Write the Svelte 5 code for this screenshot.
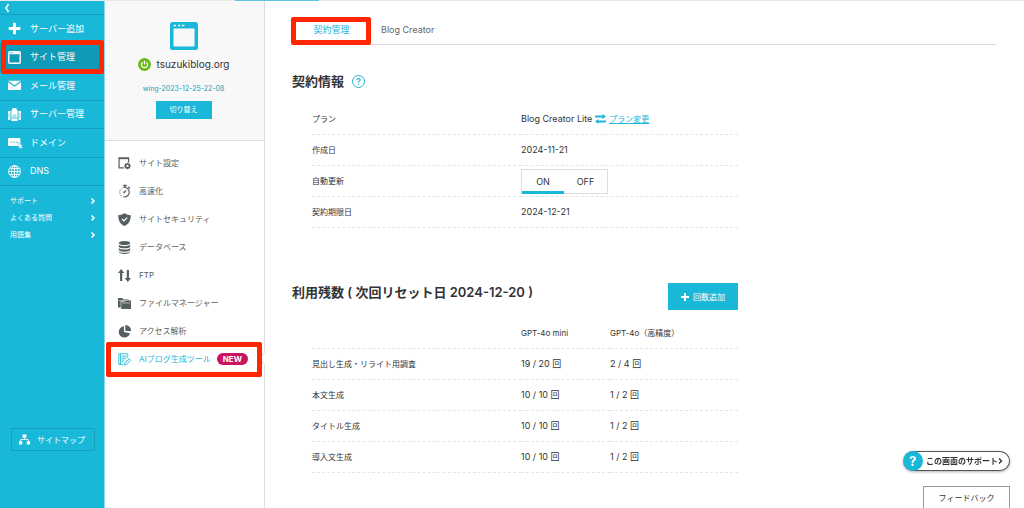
<script>
    let renewal = 'on';

    const globalMenu = [
        { label: 'サーバー追加', icon: '<path d="M7.800 1h4.400v6.800H19v4.400h-6.800V19H7.800v-6.800H1V7.800h6.800z" fill="currentColor"/>' },
        { label: 'サイト管理', active: true, icon: '<rect x="1.200" y="1.200" width="17.600" height="17.600" rx="1.500" fill="none" stroke="currentColor" stroke-width="2.200"/><path d="M2 2h16v3H2z" fill="currentColor"/><path d="M3 3h1.500M6 3h1.500" stroke="#0f9bb8" stroke-width="1.200"/>' },
        { label: 'メール管理', icon: '<path d="M0 5v12h20V5l-10 7z" fill="currentColor"/><path d="M0 2.800h20L10 9.800z" fill="currentColor"/>' },
        { label: 'サーバー管理', icon: '<path d="M5.200 3h1.600V0h6.400v3h1.600v12H5.200z" fill="currentColor"/><path d="M0 4.500h3.800V18H0zM16.200 4.500H20V18h-3.800zM5.200 16h9.600v4H5.200z" fill="currentColor"/><path d="M7 11h6M7 13.500h6M1.800 8v7M18.200 8v7" stroke="#19b8d9" stroke-width="1"/>' },
        { label: 'ドメイン', icon: '<rect x="0" y="3" width="19" height="12.500" rx="2" fill="currentColor"/><path d="M3.500 9.500h2.500M7.500 9.500h3M12 9.500h3.500" stroke="#19b8d9" stroke-width="2" opacity=".65"/><path d="M15 11l8 3.200-3 1.200 2.600 2.600-1.800 1.800-2.600-2.600-1.200 3z" fill="currentColor" stroke="#19b8d9" stroke-width=".6"/>' },
        { label: 'DNS', icon: '<g fill="none" stroke="currentColor" stroke-width="1.400"><circle cx="10" cy="10" r="9.200"/><ellipse cx="10" cy="10" rx="4.500" ry="9.200"/><path d="M10 1v18M1 10h18M2.500 5.500h15M2.500 14.500h15"/></g>' }
    ];

    const supportLinks = ['サポート', 'よくある質問', '用語集'];

    const siteMenu = [
        { label: 'サイト設定', icon: '<path d="M11 20H2V2h17.500v8" fill="none" stroke="currentColor" stroke-width="2.200"/><path d="M1 1h19.500v3H1z" fill="currentColor"/><circle cx="17.500" cy="16.500" r="3.600" fill="none" stroke="currentColor" stroke-width="3"/><path d="M17.500 10.500v2M17.500 20.500v2M11.500 16.500h2M21.500 16.500h2M13.200 12.200l1.700 1.700M20 19l1.700 1.700M13.200 20.700l1.700-1.700M20 14l1.700-1.700" stroke="currentColor" stroke-width="2.200"/>' },
        { label: '高速化', icon: '<path d="M12 4.500a8.700 8.700 0 1 1 0 17.400" fill="none" stroke="currentColor" stroke-width="2.200"/><path d="M12 21.900a8.700 8.700 0 0 1 0-17.400" fill="none" stroke="currentColor" stroke-width="1.400" stroke-dasharray="3 1.800"/><path d="M9.500 1h6.500M12.500 1v4M19 3.500l3 3" stroke="currentColor" stroke-width="2.600"/><path d="M10 12.500l6.500-4-4 6.500a1.800 1.800 0 0 1-2.500-2.500z" fill="currentColor"/>' },
        { label: 'サイトセキュリティ', icon: '<path d="M12 0c3 2.600 6.500 3.800 11.500 4.200C23.500 14 20 20.500 12 24 4 20.500.5 14 .5 4.200 5.500 3.800 9 2.600 12 0z" fill="currentColor"/><path d="M7.500 11l3.500 3.500L17 8.500" fill="none" stroke="#fff" stroke-width="2.400"/>' },
        { label: 'データベース', icon: '<ellipse cx="12" cy="3.800" rx="10.500" ry="3.800" fill="currentColor"/><path d="M1.500 6.500c2 4 19 4 21 0v4c-2 4-19 4-21 0zM1.500 12.700c2 4 19 4 21 0v4c-2 4-19 4-21 0zM1.500 18.700c2 4 19 4 21 0v1.600c-2 4.900-19 4.900-21 0z" fill="currentColor"/>' },
        { label: 'FTP', icon: '<path d="M5.800 0l5.800 7.500H7.800V22h-4V7.500H0zM18.200 24l-5.800-7.500h3.800V2h4v14.500H24z" fill="currentColor"/>' },
        { label: 'ファイルマネージャー', icon: '<path d="M0 2h8l2 2.500h9.500v3H5v12H0z" fill="currentColor"/><path d="M6 8.500h6.500l2-2H24V22H6z" fill="currentColor"/><path d="M1.500 6.500h16M7.500 11h15" stroke="#fff" stroke-width="1"/>' },
        { label: 'アクセス解析', icon: '<path d="M11 2.500A10.400 10.400 0 1 0 22 15l-11-2z" fill="currentColor"/><path d="M13.500 0A10.500 10.500 0 0 1 24 11.500l-10.500-1z" fill="currentColor"/>' },
        { label: 'AIブログ生成ツール', active: true, badge: 'NEW', icon: '<path d="M18 9V1.500H1.500V21H10M6.500 6h9M6.500 9.500h9M6.500 13h6M6.500 16.500h4M4.500 2v19" fill="none" stroke="currentColor" stroke-width="1.600"/><path d="M12 22.500l1-4.500 7.500-7.500 3 3L16 21z" fill="none" stroke="currentColor" stroke-width="1.600"/><path d="M14 18.500l6-6" stroke="currentColor"/>' }
    ];

    const usage = [
        { name: '見出し生成・リライト用調査', mini: '19 / 20 回', high: '2 / 4 回' },
        { name: '本文生成', mini: '10 / 10 回', high: '1 / 2 回' },
        { name: 'タイトル生成', mini: '10 / 10 回', high: '1 / 2 回' },
        { name: '導入文生成', mini: '10 / 10 回', high: '1 / 2 回' }
    ];
</script>

<div class="topbar"><span></span></div>
<div class="layout">
    <aside class="sidebar">
        <button class="collapse" aria-label="メニューを閉じる">
            <svg viewBox="0 0 6 8"><path d="M4.500 0L2 4l2.500 4" fill="none" stroke="currentColor" stroke-width="1.600"/></svg>
        </button>
        <nav class="global">
            {#each globalMenu as item}
                <a href="#top" class:active={item.active} class:marked={item.active}>
                    <svg viewBox="0 0 20 20">{@html item.icon}</svg>
                    <span>{item.label}</span>
                </a>
            {/each}
        </nav>
        <nav class="support">
            {#each supportLinks as link}
                <a href="#support">
                    {link}
                    <svg viewBox="0 0 6 8"><path d="M1.500 1.500L4 4 1.500 6.500" fill="none" stroke="currentColor" stroke-width="1.500"/></svg>
                </a>
            {/each}
        </nav>
        <a href="#sitemap" class="sitemap">
            <svg viewBox="0 0 20 20">
                <path d="M6.500 1h7v6h-7zM0 13h6v6H0zM14 13h6v6h-6z" fill="currentColor" />
                <path d="M10 6v4M3 14v-4h14v4" fill="none" stroke="currentColor" stroke-width="1.500" />
            </svg>
            サイトマップ
        </a>
    </aside>

    <aside class="site">
        <div class="site-head">
            <svg class="site-icon" viewBox="0 0 28 28">
                <rect width="28" height="28" rx="2.500" fill="#19b8d9" />
                <path d="M3.500 6.500h21v18h-21z" fill="#f8f8f8" />
                <path d="M3.500 3.500H6M8 3.500h2.500M12 3.500h2.500" stroke="#f8f8f8" stroke-width="1.500" />
            </svg>
            <div class="domain">
                <svg viewBox="0 0 14 14">
                    <circle cx="7" cy="7" r="7" fill="#6cb71c" />
                    <path d="M5 4.500a3.300 3.300 0 1 0 4 0M7 3v4" fill="none" stroke="#fff" stroke-width="1.300" />
                </svg>
                tsuzukiblog.org
            </div>
            <a href="#server" class="server">wing-2023-12-25-22-08</a>
            <button class="switch">切り替え</button>
        </div>
        <nav class="menu">
            {#each siteMenu as item}
                <a href="#menu" class:active={item.active} class:marked={item.active}>
                    <svg viewBox="0 0 24 24">{@html item.icon}</svg>
                    <span>{item.label}</span>
                    {#if item.badge}<b>{item.badge}</b>{/if}
                </a>
            {/each}
        </nav>
    </aside>

    <main>
        <nav class="tabs">
            <a href="#contract" class="active marked">契約管理</a>
            <a href="#creator">Blog Creator</a>
        </nav>

        <section>
            <header>
                <h2>契約情報</h2>
                <button class="help" aria-label="ヘルプ">?</button>
            </header>
            <table>
                <tbody>
                    <tr>
                        <th scope="row">プラン</th>
                        <td colspan="2">
                            <div class="plan">
                                Blog Creator Lite
                                <svg viewBox="0 0 11 10">
                                    <path d="M0 1.500h7.500V0L11 2.500 7.500 5V3.500H0zM11 8.500H3.500V10L0 7.500 3.500 5v1.500H11z" fill="#19b8d9" />
                                </svg>
                                <a href="#plan">プラン変更</a>
                            </div>
                        </td>
                    </tr>
                    <tr><th scope="row">作成日</th><td colspan="2">2024-11-21</td></tr>
                    <tr>
                        <th scope="row">自動更新</th>
                        <td colspan="2">
                            <div class="toggle">
                                <label><input type="radio" name="renewal" value="on" bind:group={renewal} /><span>ON</span></label>
                                <label><input type="radio" name="renewal" value="off" bind:group={renewal} /><span>OFF</span></label>
                            </div>
                        </td>
                    </tr>
                    <tr><th scope="row">契約期限日</th><td colspan="2">2024-12-21</td></tr>
                </tbody>
            </table>
        </section>

        <section class="usage">
            <header>
                <h2>利用残数 ( 次回リセット日 2024-12-20 )</h2>
                <button class="add">
                    <svg viewBox="0 0 8 8"><path d="M4 0v8M0 4h8" stroke="currentColor" stroke-width="2" /></svg>
                    回数追加
                </button>
            </header>
            <table>
                <thead>
                    <tr><td></td><th scope="col">GPT-4o mini</th><th scope="col">GPT-4o（高精度）</th></tr>
                </thead>
                <tbody>
                    {#each usage as row}
                        <tr><th scope="row">{row.name}</th><td>{row.mini}</td><td>{row.high}</td></tr>
                    {/each}
                </tbody>
            </table>
        </section>
    </main>
</div>

<div class="floating">
    <button class="screen-help">
        <i>?</i>
        この画面のサポート
        <svg viewBox="0 0 5 8"><path d="M1 1.500L3.500 4 1 6.500" fill="none" stroke="currentColor" stroke-width="1.400"/></svg>
    </button>
    <button class="feedback">フィードバック</button>
</div>

<style>
    :global(body) {
        margin: 0;
        background: #fff;
        color: #333;
        font: 9px/16px Inter, "Noto Sans CJK JP", sans-serif;
    }
    * {
        box-sizing: border-box;
    }
    a {
        color: inherit;
        text-decoration: none;
    }
    button {
        margin: 0;
        padding: 0;
        border: 0;
        background: none;
        color: inherit;
        font: inherit;
        cursor: pointer;
    }
    svg {
        flex: none;
        overflow: visible;
    }
    .topbar {
        height: 1px;
        background: #e8e8e8;
    }
    .topbar span {
        display: block;
        width: 84px;
        height: 1px;
        margin-left: 235px;
        background: #5cc5df;
    }
    .layout {
        display: flex;
        min-height: calc(100vh - 1px);
    }

    /* highlighted entries */
    .marked {
        position: relative;
    }
    .marked::after {
        content: "";
        position: absolute;
        inset: -4px 0 -3px 1px;
        border: 5px solid #ff2600;
        border-radius: 2px;
        z-index: 1;
    }

    .sidebar {
        flex: none;
        display: flex;
        flex-direction: column;
        width: 105px;
        border-right: 1px solid #8bdaec;
        background: #19b8d9;
        color: #fff;
    }
    .collapse {
        height: 13px;
        padding-left: 4px;
        text-align: left;
        line-height: 0;
    }
    .collapse svg {
        width: 6px;
        height: 8px;
    }
    .global {
        display: grid;
        grid-auto-rows: 1fr;
        height: 172px;
        border-bottom: 1px solid #149fbd;
    }
    .global a {
        display: flex;
        align-items: center;
        gap: 9px;
        padding-left: 8px;
        border-top: 1px solid #149fbd;
    }
    .global a.active {
        background: #0f9bb8;
    }
    .global svg {
        width: 13px;
        height: 13px;
    }
    .support {
        padding: 6px 8px 0 10px;
        font-size: 7px;
        line-height: 17px;
    }
    .support a {
        display: flex;
        align-items: center;
        justify-content: space-between;
    }
    .support svg {
        width: 6px;
        height: 8px;
    }
    .sitemap {
        display: flex;
        align-items: center;
        gap: 7px;
        height: 23px;
        margin: auto 9px 57px 11px;
        padding-left: 7px;
        border: 1px solid #149fbd;
        font-size: 8px;
    }
    .sitemap svg {
        width: 11px;
        height: 11px;
    }

    .site {
        flex: none;
        width: 160px;
        border-right: 1px solid #ddd;
    }
    .site-head {
        display: flex;
        flex-direction: column;
        align-items: center;
        height: 140px;
        padding: 21px 2px 0 0;
        border-bottom: 1px solid #ddd;
        background: #f8f8f8;
    }
    .site-icon {
        width: 28px;
        height: 28px;
    }
    .domain {
        display: flex;
        align-items: center;
        gap: 6px;
        margin-top: 6px;
        font-size: 10px;
    }
    .domain svg {
        width: 13px;
        height: 13px;
    }
    .server {
        margin: 9px 0 4px;
        color: #1a9fbb;
        font-size: 7px;
    }
    .switch {
        width: 56px;
        height: 18px;
        background: #19b8d9;
        color: #fff;
        font-size: 7px;
    }
    .menu {
        padding-top: 8px;
        color: #555f61;
        font-size: 8px;
    }
    .menu a {
        display: flex;
        align-items: center;
        height: 28px;
        padding-left: 13px;
    }
    .menu a.active {
        color: #19b8d9;
    }
    .menu .marked::after {
        inset: -3px 2px -4px 1px;
    }
    /* notch that points at the open entry */
    .menu a.active::before {
        content: "";
        position: absolute;
        top: 9px;
        right: -5px;
        width: 8px;
        height: 8px;
        border: solid #ddd;
        border-width: 0 0 1px 1px;
        background: #fff;
        transform: rotate(45deg);
    }
    .menu svg {
        width: 13px;
        height: 13px;
        margin-right: 8px;
    }
    .menu b {
        margin-left: 6px;
        padding: 0 6px;
        border-radius: 6px;
        background: #c9145f;
        color: #fff;
        line-height: 12px;
    }

    main {
        flex: 1;
        padding: 16px 28px 0 27px;
    }
    .tabs {
        display: flex;
        height: 28px;
        border-bottom: 1px solid #ddd;
        color: #666;
        line-height: 26px;
    }
    .tabs a.active {
        width: 79px;
        margin-right: 10px;
        color: #19b8d9;
        text-align: center;
    }
    .tabs .marked::after {
        inset: 0 0 -1px -1px;
    }
    section {
        max-width: 446px;
        padding-top: 22px;
    }
    .usage {
        padding-top: 40px;
    }
    header {
        display: flex;
        align-items: center;
        height: 28px;
        margin-bottom: 9px;
    }
    .usage header {
        align-items: flex-start;
        justify-content: space-between;
        margin: 15px 0 7px;
    }
    h2 {
        margin: 0;
        font-size: 13px;
        font-weight: 600;
        line-height: 18px;
    }
    .help {
        width: 13px;
        height: 13px;
        margin-left: 8px;
        border: 1px solid #19b8d9;
        border-radius: 50%;
        color: #19b8d9;
        font-weight: 600;
        line-height: 11px;
    }
    .add {
        display: flex;
        align-items: center;
        justify-content: center;
        gap: 4px;
        width: 70px;
        height: 27px;
        background: #19b8d9;
        color: #fff;
        font-size: 8px;
    }
    .add svg {
        width: 8px;
        height: 8px;
    }
    table {
        width: calc(100% - 20px);
        margin-left: 20px;
        border-collapse: separate;
        border-spacing: 0;
        table-layout: fixed;
    }
    td, th {
        height: 31px;
        padding: 0;
        border-bottom: 1px dashed #e6e6e6;
        font-weight: 400;
        text-align: left;
    }
    tr > :first-child {
        width: 209px;
        font-size: 8px;
    }
    thead th:nth-child(2) {
        width: 89px;
    }
    thead th {
        font-size: 8px;
    }
    .plan {
        display: flex;
        align-items: center;
        gap: 3px;
    }
    .plan svg {
        width: 11px;
        height: 10px;
    }
    .plan a {
        color: #19b8d9;
        font-size: 8px;
        text-decoration: underline;
    }
    .toggle {
        display: grid;
        grid-template-columns: 42px 1fr;
        width: 87px;
        height: 25px;
        border: 1px solid #ddd;
    }
    .toggle label {
        position: relative;
        cursor: pointer;
    }
    .toggle input {
        position: absolute;
        inset: 0;
        margin: 0;
        opacity: 0;
    }
    .toggle span {
        display: block;
        height: 24px;
        line-height: 23px;
        text-align: center;
    }
    .toggle input:checked + span {
        border-bottom: 3px solid #19b8d9;
    }

    .floating {
        position: fixed;
        right: 14px;
        bottom: 0;
        display: flex;
        flex-direction: column;
        align-items: flex-end;
        gap: 15px;
    }
    .screen-help {
        display: flex;
        align-items: center;
        height: 20px;
        padding-right: 6px;
        border: 1px solid #555;
        border-left: 0;
        border-radius: 10px;
        background: #fff;
        box-shadow: 0 1px 3px rgba(0, 0, 0, .3);
        font-size: 8px;
        font-weight: 700;
    }
    .screen-help i {
        width: 20px;
        height: 20px;
        margin-right: 3px;
        border-radius: 50%;
        background: #19b8d9;
        color: #fff;
        font-size: 13px;
        font-style: normal;
        line-height: 20px;
    }
    .screen-help svg {
        width: 5px;
        height: 8px;
    }
    .feedback {
        width: 87px;
        height: 22px;
        border: 1px solid #999;
        border-bottom: 0;
        background: #fff;
        font-size: 8px;
    }
</style>
